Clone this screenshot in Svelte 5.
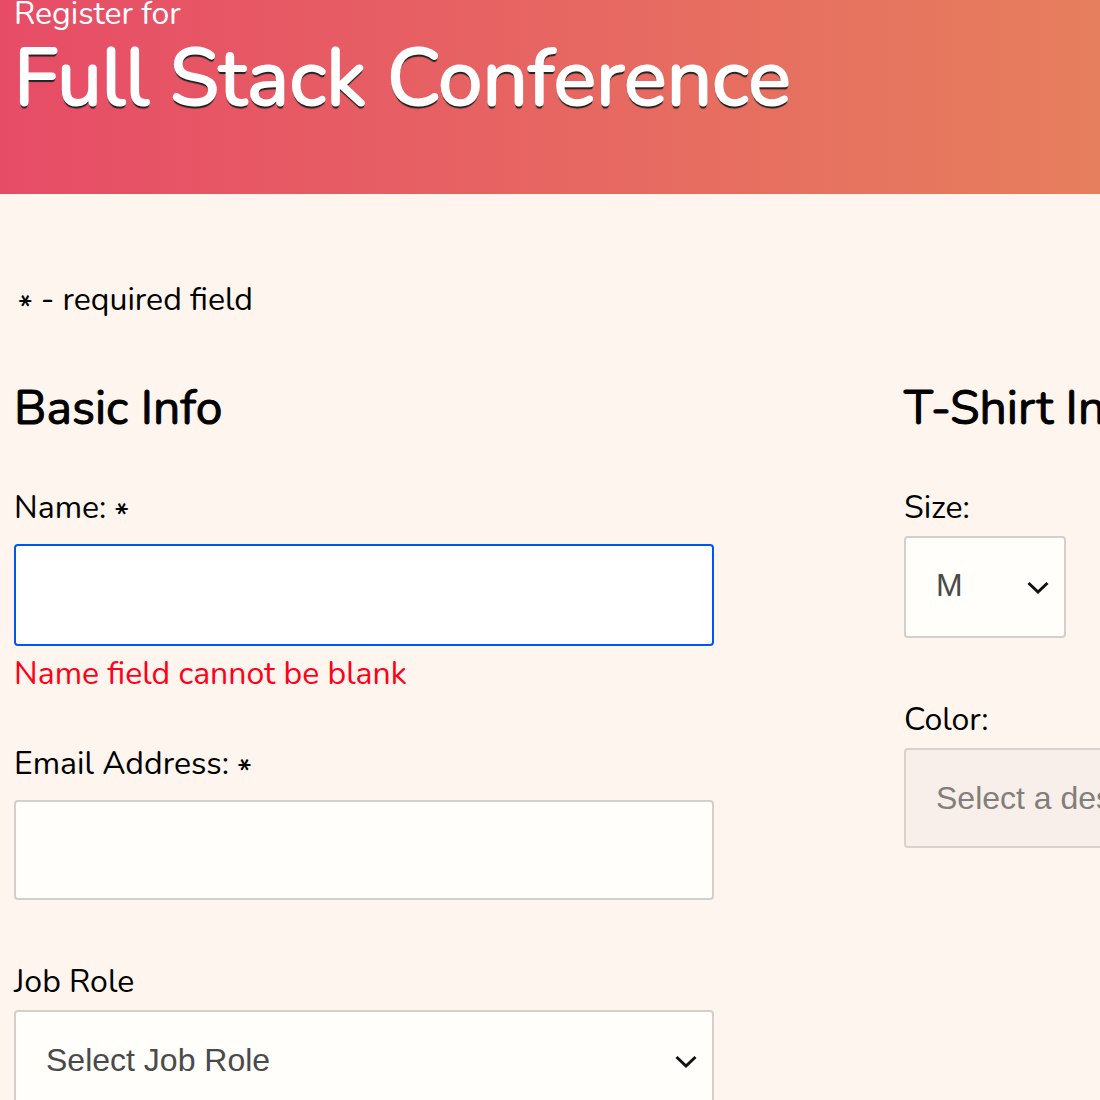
<script>
  let name = $state('');
  let email = $state('');
  let role = $state('');
  let size = $state('M');
  let color = $state('');
</script>

<header>
  <span class="eyebrow">Register for</span>
  <h1>Full Stack Conference</h1>
</header>

<form>
  <p class="note"><span class="star">*</span> - required field</p>
  <div class="columns">
    <fieldset>
      <legend>Basic Info</legend>
      <label for="name">Name: <span class="star">*</span></label>
      <input id="name" class="active" type="text" bind:value={name} />
      <p class="hint">Name field cannot be blank</p>
      <label for="email">Email Address: <span class="star">*</span></label>
      <input id="email" type="email" bind:value={email} />
      <label class="tight next" for="role">Job Role</label>
      <div class="select">
        <select id="role" bind:value={role}>
          <option value="">Select Job Role</option>
          <option value="designer">Designer</option>
        </select>
        <svg viewBox="0 0 22 14"><path d="M1.5 2 L11 11 L20.5 2" /></svg>
      </div>
    </fieldset>
    <fieldset>
      <legend>T-Shirt Info</legend>
      <label class="tight" for="size">Size:</label>
      <div class="select small">
        <select id="size" bind:value={size}>
          <option>S</option>
          <option>M</option>
          <option>L</option>
        </select>
        <svg viewBox="0 0 22 14"><path d="M1.5 2 L11 11 L20.5 2" /></svg>
      </div>
      <label class="tight next" for="color">Color:</label>
      <div class="select">
        <select id="color" bind:value={color} disabled>
          <option value="">Select a design theme above</option>
        </select>
      </div>
    </fieldset>
  </div>
</form>

<style>
  :global(body) {
    margin: 0;
    background: #fef5ee;
    overflow: hidden;
  }
  :global(#app) {
    height: 100vh;
    overflow: hidden;
    font: 32px/44px Nunito, "Open Sans", sans-serif;
    color: #000;
  }
  header {
    padding: 0 14px 64px;
    color: #fff;
    background: linear-gradient(90deg, #e74c67, #e67f5d);
  }
  .eyebrow {
    display: block;
    line-height: 28px;
  }
  h1 {
    margin: 0;
    font-size: 80px;
    line-height: 102px;
    font-weight: 400;
    white-space: nowrap;
    -webkit-text-stroke: 2px #fff;
    text-shadow: 0 2px 1px #222, 0 3px 1px #222;
  }
  form {
    padding: 84px 14px 0;
  }
  p {
    margin: 0;
  }
  .note {
    padding-left: 4px;
  }
  .star {
    font-weight: 600;
    line-height: 0;
    vertical-align: -8px;
  }
  .columns {
    display: grid;
    grid-template-columns: 700px 700px;
    gap: 190px;
    padding-top: 56px;
  }
  fieldset {
    min-width: 0;
    margin: 0;
    padding: 0;
    border: 0;
  }
  legend {
    padding: 0;
    margin-bottom: 48px;
    font-size: 48px;
    line-height: 60px;
    -webkit-text-stroke: 1px #000;
  }
  label {
    display: block;
    margin-bottom: 14px;
  }
  .tight {
    margin-bottom: 6px;
  }
  .next {
    margin-top: 60px;
  }
  input,
  select {
    display: block;
    box-sizing: border-box;
    width: 100%;
    height: 100px;
    margin: 0;
    padding: 0 30px;
    border: 2px solid #d3cfca;
    border-radius: 4px;
    background: #fffefa;
    color: #4a4a4a;
    font: 32px "Liberation Sans", Arial, sans-serif;
    appearance: none;
    outline: none;
  }
  select:disabled {
    border-color: #dad1cd;
    background: #f8efeb;
    color: #827f7b;
    opacity: 1;
  }
  .active {
    height: 102px;
    border-color: #0055f5;
    background: #fff;
  }
  .hint {
    color: #ff0019;
    margin: 6px 0 46px;
  }
  .select {
    position: relative;
  }
  .small {
    width: 162px;
  }
  .small select {
    height: 102px;
    padding-bottom: 4px;
  }
  svg {
    position: absolute;
    right: 17px;
    top: 45px;
    width: 22px;
    height: 14px;
    fill: none;
    stroke: #111;
    stroke-width: 3;
    pointer-events: none;
  }
</style>
